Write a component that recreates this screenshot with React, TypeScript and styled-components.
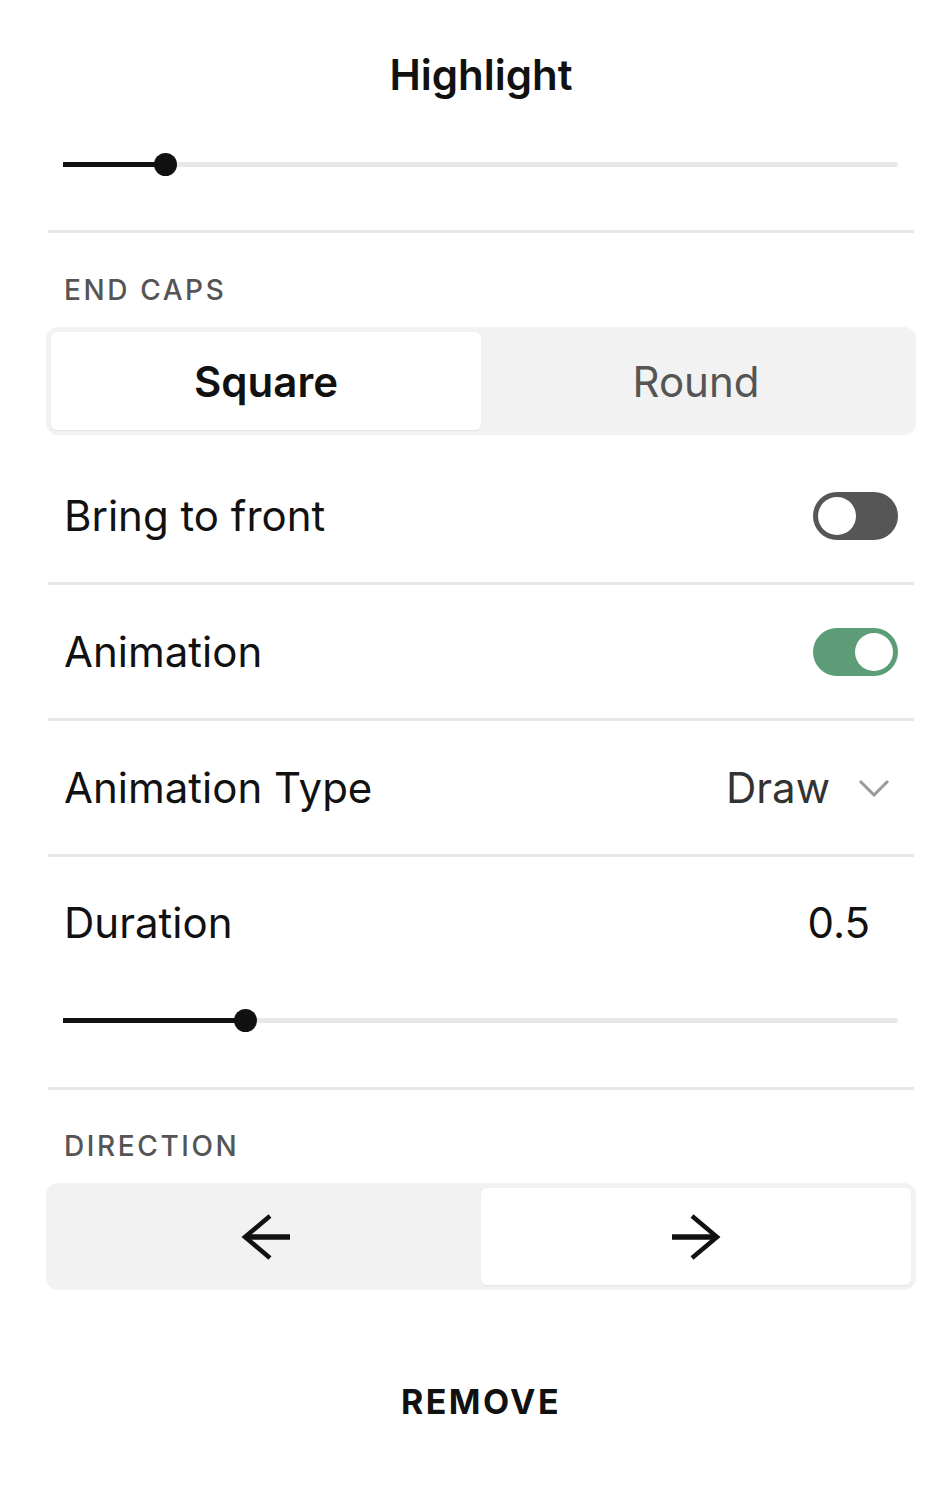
import React from "react";
import styled, { createGlobalStyle } from "styled-components";

const GlobalStyle = createGlobalStyle`
  body {
    margin: 0;
    background: #fff;
    font-family: Inter, "Liberation Sans", Arial, sans-serif;
    color: #111;
  }
  * { box-sizing: border-box; }
`;

const Panel = styled.div`
  width: 944px;
  min-height: 1500px;
  padding: 0 30px 0 48px;
  background: #fff;
`;

const Title = styled.h1`
  margin: 0;
  padding-top: 50px;
  font-size: 42px;
  line-height: 50px;
  font-weight: 600;
  text-align: center;
  color: #111;
`;

const SliderWrap = styled.div<{ $top: number; $bottom: number }>`
  position: relative;
  height: 24px;
  margin: ${(p) => p.$top}px 16px ${(p) => p.$bottom}px 15px;
  display: flex;
  align-items: center;
`;

const Track = styled.div`
  position: relative;
  width: 100%;
  height: 5px;
  border-radius: 3px;
  background: #e8e8e8;
`;

const Fill = styled.div`
  position: absolute;
  left: 0;
  top: 0;
  height: 5px;
  background: #111;
`;

const Thumb = styled.div`
  position: absolute;
  top: 50%;
  width: 23px;
  height: 23px;
  margin: -11.5px 0 0 -11.5px;
  border-radius: 50%;
  background: #111;
`;

const Divider = styled.hr`
  margin: 0;
  border: 0;
  height: 3px;
  background: #e6e6e6;
`;

const SectionLabel = styled.div<{ $top: number }>`
  margin: ${(p) => p.$top}px 0 22px 16px;
  font-size: 28px;
  line-height: 30px;
  font-weight: 500;
  letter-spacing: 2.6px;
  color: #555;
`;

const Segmented = styled.div<{ $height: number }>`
  display: flex;
  margin: 0 -2px;
  padding: 5px;
  height: ${(p) => p.$height}px;
  border-radius: 12px;
  background: #f2f2f2;
`;

const Segment = styled.div<{ $active?: boolean }>`
  flex: 1;
  display: flex;
  align-items: center;
  justify-content: center;
  border-radius: 6px;
  background: ${(p) => (p.$active ? "#fff" : "transparent")};
  box-shadow: ${(p) => (p.$active ? "0 1px 2px rgba(0,0,0,0.06)" : "none")};
  font-size: 42px;
  font-weight: ${(p) => (p.$active ? 600 : 400)};
  color: ${(p) => (p.$active ? "#111" : "#555")};
`;

const Row = styled.div<{ $top?: number }>`
  height: 133px;
  margin-top: ${(p) => p.$top ?? 0}px;
  padding: 0 16px;
  display: flex;
  align-items: center;
  justify-content: space-between;
`;

const RowLabel = styled.span`
  font-size: 42px;
  line-height: 42px;
  color: #111;
`;

const Toggle = styled.div<{ $on?: boolean }>`
  width: 85px;
  height: 48px;
  border-radius: 24px;
  padding: 5px;
  display: flex;
  justify-content: ${(p) => (p.$on ? "flex-end" : "flex-start")};
  background: ${(p) => (p.$on ? "#5c9d78" : "#565656")};
`;

const Knob = styled.div`
  width: 38px;
  height: 38px;
  border-radius: 50%;
  background: #fff;
`;

const Select = styled.div`
  display: flex;
  align-items: center;
  gap: 28px;
  margin-right: 8px;
  font-size: 42px;
  color: #333;
`;

const DurationBlock = styled.div`
  padding-top: 45px;
`;

const DurationHead = styled.div`
  display: flex;
  justify-content: space-between;
  padding: 0 44px 0 16px;
`;

const Value = styled.span`
  font-size: 42px;
  line-height: 42px;
  color: #111;
`;

const RemoveButton = styled.button`
  display: block;
  margin: 92px auto 0;
  padding: 0;
  border: 0;
  background: none;
  font-family: inherit;
  font-size: 34px;
  line-height: 40px;
  font-weight: 700;
  letter-spacing: 2.4px;
  color: #111;
`;

const Slider = ({ value, top, bottom }: { value: number; top: number; bottom: number }) => (
  <SliderWrap $top={top} $bottom={bottom}>
    <Track>
      <Fill style={{ width: `${value}%` }} />
      <Thumb style={{ left: `${value}%` }} />
    </Track>
  </SliderWrap>
);

const Chevron = () => (
  <svg width="32" height="18" viewBox="0 0 32 18" fill="none">
    <path d="M2 2 L16 16 L30 2" stroke="#9a9a9a" strokeWidth="3" />
  </svg>
);

const Arrow = ({ dir }: { dir: "left" | "right" }) => (
  <svg
    width="50"
    height="48"
    viewBox="0 0 50 48"
    fill="none"
    style={{ transform: dir === "right" ? "scaleX(-1)" : undefined }}
  >
    <path d="M49 24 H5" stroke="#111" strokeWidth="5.5" />
    <path d="M29 3 L4 24 L29 45" stroke="#111" strokeWidth="4.5" />
  </svg>
);

export default function App() {
  return (
    <>
      <GlobalStyle />
      <Panel>
        <Title>Highlight</Title>
        <Slider value={12.3} top={52} bottom={54} />
        <Divider />

        <SectionLabel $top={42}>END CAPS</SectionLabel>
        <Segmented $height={108}>
          <Segment $active>Square</Segment>
          <Segment>Round</Segment>
        </Segmented>

        <Row $top={14}>
          <RowLabel>Bring to front</RowLabel>
          <Toggle>
            <Knob />
          </Toggle>
        </Row>
        <Divider />
        <Row>
          <RowLabel>Animation</RowLabel>
          <Toggle $on>
            <Knob />
          </Toggle>
        </Row>
        <Divider />
        <Row>
          <RowLabel>Animation Type</RowLabel>
          <Select>
            Draw
            <Chevron />
          </Select>
        </Row>
        <Divider />

        <DurationBlock>
          <DurationHead>
            <RowLabel>Duration</RowLabel>
            <Value>0.5</Value>
          </DurationHead>
          <Slider value={21.9} top={64} bottom={55} />
        </DurationBlock>
        <Divider />

        <SectionLabel $top={41}>DIRECTION</SectionLabel>
        <Segmented $height={107}>
          <Segment>
            <Arrow dir="left" />
          </Segment>
          <Segment $active>
            <Arrow dir="right" />
          </Segment>
        </Segmented>

        <RemoveButton>REMOVE</RemoveButton>
      </Panel>
    </>
  );
}
